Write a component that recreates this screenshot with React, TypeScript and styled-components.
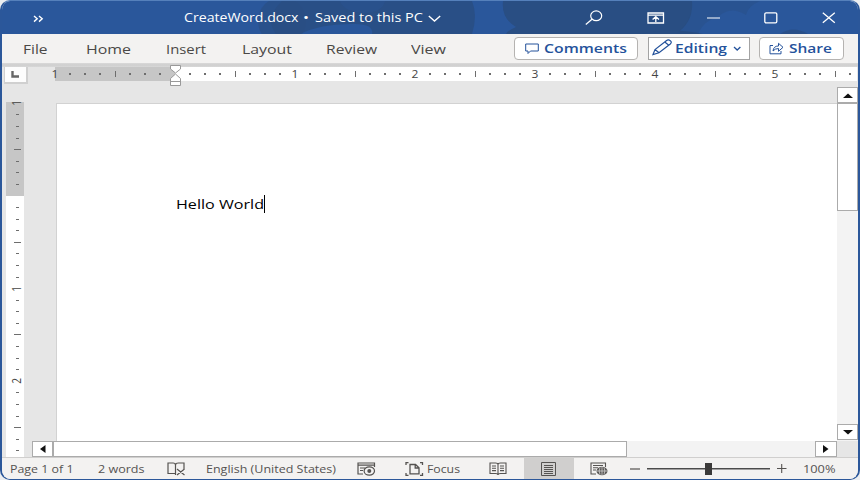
import React, { useLayoutEffect, useRef, useState } from "react";
import styled, { createGlobalStyle } from "styled-components";

const GlobalStyle = createGlobalStyle`
  * { box-sizing: border-box; }
  body { margin: 0; background: #eceef0; font-family: "Open Sans", "Noto Sans", sans-serif; overflow: hidden; }
  svg { display: block; flex: none; }
`;

const Window = styled.div`
  position: relative;
  width: 860px;
  height: 480px;
  display: flex;
  flex-direction: column;
  overflow: hidden;
  border: 2px solid #2b579a;
  border-top-width: 1px;
  border-top-color: #5580bb;
  border-bottom-width: 1px;
  border-radius: 10px;
  background: #e6e6e6;
`;

const TitleBar = styled.header`
  position: relative;
  flex: none;
  height: 33px;
  display: flex;
  align-items: center;
  background: #2a579b;
  color: #fff;
`;

const TitlePattern = styled.svg`
  position: absolute;
  inset: 0;
`;

const Item = styled.div<{ $before?: number; $shift?: number }>`
  position: relative;
  flex: none;
  margin-left: ${(p) => p.$before ?? 0}px;
  top: ${(p) => p.$shift ?? 0}px;
`;

const Ribbon = styled.nav`
  flex: none;
  height: 29px;
  display: flex;
  align-items: center;
  background: #f3f2f1;
  color: #4a4846;
`;

const RibbonEdge = styled.div`
  flex: none;
  height: 4px;
  background: linear-gradient(#dad9d9, #cfcfcf 50%, #d8d8d8);
`;

const RibbonButton = styled.button<{ $width: number; $before: number; $square?: boolean }>`
  flex: none;
  display: flex;
  align-items: center;
  width: ${(p) => p.$width}px;
  height: 23px;
  margin: 0 0 0 ${(p) => p.$before}px;
  padding: 0;
  border: 1px solid ${(p) => (p.$square ? "#a3a3a3" : "#b5b3b1")};
  border-radius: ${(p) => (p.$square ? 0 : 4)}px;
  background: #fff;
  color: #24529b;
  font-family: inherit;
  text-align: left;
`;

const FitBox = styled.span<{ $width: number; $size: number; $weight: number }>`
  display: block;
  flex: none;
  width: ${(p) => p.$width}px;
  font-size: ${(p) => p.$size}px;
  font-weight: ${(p) => p.$weight};
  line-height: 18px;
  height: 18px;
`;

const FitInner = styled.span`
  display: inline-block;
  white-space: nowrap;
  transform-origin: 0 50%;
`;

function Wide({ text, width, size, weight = 400 }: { text: string; width: number; size: number; weight?: number }) {
  const ref = useRef<HTMLSpanElement>(null);
  const [scale, setScale] = useState(1);
  useLayoutEffect(() => {
    const natural = parseFloat(getComputedStyle(ref.current!).width);
    if (natural) setScale(width / natural);
  }, [text, width, size, weight]);
  return (
    <FitBox $width={width} $size={size} $weight={weight}>
      <FitInner ref={ref} style={{ transform: `scaleX(${scale})` }}>{text}</FitInner>
    </FitBox>
  );
}

const RulerRow = styled.div`
  flex: none;
  height: 20px;
  display: flex;
  align-items: flex-start;
`;

const TabSelector = styled.div`
  flex: none;
  width: 24px;
  height: 17px;
  margin-left: 2px;
  border: 1px solid #d0d0d0;
  border-width: 0 2px 2px 1px;
  background: #fdfdfd;
  display: flex;
  align-items: center;
  justify-content: center;
`;

const HRuler = styled.div`
  position: relative;
  flex: none;
  width: 802px;
  height: 14px;
  margin-left: 27px;
  display: flex;
  background: linear-gradient(to right, #c6c6c6 120px, #fff 120px);
`;

const HTicks = styled.div`
  display: flex;
  width: 802px;
  margin-left: -7.5px;
`;

const HCell = styled.div`
  flex: none;
  width: 15px;
  height: 14px;
  display: flex;
  align-items: center;
  justify-content: center;
  font-size: 10px;
  line-height: 14px;
  color: #444;
`;

const Mark = styled.i<{ $w: number; $h: number }>`
  display: block;
  width: ${(p) => p.$w}px;
  height: ${(p) => p.$h}px;
  background: #6d6d6d;
`;

const Digit = styled.span<{ $vertical?: boolean }>`
  display: block;
  transform: ${(p) => (p.$vertical ? "translateX(-1px) rotate(-90deg) scaleY(1.2)" : "scaleX(1.2)")};
`;

const IndentMarker = styled.svg`
  position: absolute;
  left: 114px;
  top: -3px;
  overflow: visible;
`;

const Workspace = styled.main`
  flex: 1;
  min-height: 0;
  display: flex;
`;

const VRulerColumn = styled.div`
  flex: none;
  width: 30px;
  padding: 15px 0 0 4px;
`;

const VRuler = styled.div`
  width: 18px;
  height: 355px;
  display: flex;
  align-items: flex-start;
  background: linear-gradient(#c6c6c6 94px, #fff 94px);
`;

const VTicks = styled.div`
  margin-top: -4.4px;
`;

const VCell = styled.div`
  height: 11.58px;
  padding-left: 4px;
  width: 18px;
  display: flex;
  align-items: center;
  justify-content: center;
  font-size: 10px;
  line-height: 12px;
  color: #444;
`;

const Pane = styled.div`
  flex: none;
  width: 826px;
  display: flex;
  flex-direction: column;
`;

const Upper = styled.div`
  flex: none;
  height: 354px;
  display: flex;
`;

const Canvas = styled.div`
  flex: none;
  width: 805px;
  padding: 16px 0 0 24px;
`;

const Page = styled.article`
  height: 338px;
  padding: 91px 0 0 119px;
  border: 1px solid #d2d2d2;
  border-width: 1px 0 0 1px;
  background: #fff;
  color: #000;
  display: flex;
  align-items: flex-start;
`;

const Caret = styled.i`
  width: 1px;
  height: 18px;
  background: #000;
`;

const VScroll = styled.div`
  flex: none;
  width: 21px;
  padding-bottom: 1px;
  display: flex;
  flex-direction: column;
  background: #f3f3f3;
`;

const HScroll = styled.div`
  flex: none;
  width: 805px;
  height: 16px;
  display: flex;
  background: #f3f3f3;
`;

const ScrollPart = styled.div<{ $w: number; $h: number }>`
  flex: none;
  width: ${(p) => p.$w}px;
  height: ${(p) => p.$h}px;
  border: 1px solid #ababab;
  background: #fff;
  display: flex;
  align-items: center;
  justify-content: center;
`;

const Filler = styled.div`
  flex: 1;
`;

const StatusBar = styled.footer`
  flex: none;
  height: 22px;
  display: flex;
  align-items: center;
  background: #f3f2f1;
  border-top: 1px solid #d0cfce;
  color: #555351;
`;

const ActiveView = styled.div`
  flex: none;
  width: 50px;
  height: 21px;
  margin-left: 17px;
  padding-right: 2px;
  background: #d0cfce;
  display: flex;
  align-items: center;
  justify-content: center;
`;

const Slider = styled.div`
  flex: none;
  width: 123px;
  height: 12px;
  margin-left: 7px;
  display: flex;
  align-items: center;
  justify-content: center;
  background: linear-gradient(#4b4b4b, #4b4b4b) center / 100% 1.5px no-repeat;
`;

const Thumb = styled.i`
  width: 7px;
  height: 12px;
  background: #3b3a39;
`;

const hLabels: Record<number, string> = { 0: "1", 16: "1", 24: "2", 32: "3", 40: "4", 48: "5" };
const vLabels: Record<number, string> = { 0: "1", 16: "1", 24: "2" };

function HTick({ index }: { index: number }) {
  if (hLabels[index]) return <HCell><Digit>{hLabels[index]}</Digit></HCell>;
  if (index === 8) return <HCell />;
  return <HCell><Mark $w={index % 4 === 0 ? 1 : 2} $h={index % 4 === 0 ? 6 : 2} /></HCell>;
}

function VTick({ index }: { index: number }) {
  if (vLabels[index]) return <VCell><Digit $vertical>{vLabels[index]}</Digit></VCell>;
  if (index === 8) return <VCell />;
  return <VCell><Mark $w={index % 4 === 0 ? 7 : 3} $h={1} /></VCell>;
}

const tabs = [
  { name: "File", before: 21, width: 24.5 },
  { name: "Home", before: 38.5, width: 45 },
  { name: "Insert", before: 35, width: 40 },
  { name: "Layout", before: 35.5, width: 50 },
  { name: "Review", before: 34, width: 51 },
  { name: "View", before: 34, width: 35 },
];

const line = { fill: "none", stroke: "currentColor" } as const;

export default function App() {
  return (
    <>
      <GlobalStyle />
      <Window>
        <TitleBar>
          <TitlePattern width="856" height="33" viewBox="2 1 856 33">
            <g fill="#294e83">
              <circle cx="282" cy="21" r="24" opacity=".65" />
              <path d="M282 1H472Q478 15 472 34H372Q374 24 355 24Q322 23 300 34H276Q264 18 282 1Z" opacity=".85" />
              <path d="M503 1H692Q694 22 676 34H506Q507 31 516 27Q501 18 503 1Z" />
              <path d="M640 34Q674 27 703 34Z" />
              <path d="M690 1H760Q748 6 746 15Q730 5 718 17Q704 20 698 34H676Q694 20 690 1Z" opacity=".4" />
              <path d="M780 34Q793 25 808 34Z" opacity=".8" />
            </g>
            <path d="M340 1H385Q382 13 363 13Q344 12 340 1Z" fill="#2a579b" opacity=".3" />
          </TitlePattern>
          <Item $before={31} $shift={1}>
            <svg width="11" height="8" viewBox="0 0 11 8"><path d="M1 1l3.2 2.8L1 6.6M6 1l3.2 2.8L6 6.6" {...line} strokeWidth="1.4" /></svg>
          </Item>
          <Item $before={139.5} $shift={0.5}><Wide text="CreateWord.docx" width={114.5} size={12} /></Item>
          <Item $before={4.5} $shift={0.5}><Wide text="•" width={6} size={12} /></Item>
          <Item $before={6} $shift={0.5}><Wide text="Saved to this PC" width={108} size={12} /></Item>
          <Item $before={5} $shift={1}>
            <svg width="13" height="8" viewBox="0 0 13 8"><path d="M.8 1l5.7 5 5.7-5" {...line} strokeWidth="1.4" /></svg>
          </Item>
          <Item $before={144}>
            <svg width="18" height="16" viewBox="0 0 18 16"><ellipse cx="11.2" cy="5.8" rx="5.5" ry="4.9" {...line} strokeWidth="1.2" /><path d="M7 9.3L.8 14.6" {...line} strokeWidth="1.3" /></svg>
          </Item>
          <Item $before={44.5}>
            <svg width="18" height="12" viewBox="0 0 18 12"><path d="M1 1h15.5v10H1zM1 3.2h15.5M8.8 10V5M5.6 7.4l3.2-2.7L12 7.4" {...line} strokeWidth="1.3" /></svg>
          </Item>
          <Item $before={42}><svg width="14" height="2"><path d="M0 1h13" {...line} strokeWidth="1.2" /></svg></Item>
          <Item $before={43}>
            <svg width="14" height="12"><rect x=".8" y=".8" width="12" height="10" rx="1.3" {...line} strokeWidth="1.3" /></svg>
          </Item>
          <Item $before={43.5}>
            <svg width="14" height="12"><path d="M.8.8l12 10M12.8.8l-12 10" {...line} strokeWidth="1.3" /></svg>
          </Item>
        </TitleBar>

        <Ribbon>
          {tabs.map((t) => (
            <Item key={t.name} $before={t.before}><Wide text={t.name} width={t.width} size={12.8} /></Item>
          ))}
          <RibbonButton $width={124} $before={68.5}>
            <Item $before={10}>
              <svg width="14" height="12" viewBox="0 0 14 12"><path d="M.7 1h12.6v7H5.5L3 10.5V8H.7z" {...line} strokeWidth="1" /></svg>
            </Item>
            <Item $before={5} $shift={0.5}><Wide text="Comments" width={83} size={12.3} weight={600} /></Item>
          </RibbonButton>
          <RibbonButton $width={102} $before={9.5} $square>
            <Item $before={3} $shift={-1}>
              <svg width="21" height="17" viewBox="0 0 21 17"><path d="M1 15.5l2-5L14.3 1.7q2-1.5 4 0t0 3.3L7 13.8zM3 10.5l4 3.3M12.8 3l4 3.2" {...line} strokeWidth="1.2" /></svg>
            </Item>
            <Item $before={2} $shift={0.5}><Wide text="Editing" width={52} size={12.3} weight={600} /></Item>
            <Item $before={6}>
              <svg width="9" height="6"><path d="M1 1l3.2 3L7.4 1" {...line} strokeWidth="1.3" /></svg>
            </Item>
          </RibbonButton>
          <RibbonButton $width={85} $before={9.5}>
            <Item $before={9}>
              <svg width="15" height="13" viewBox="0 0 15 13"><path d="M4 3.5H1v8.3h11V9M4 9q.5-5 5.5-5V1.3l4.5 4-4.5 4V6.5Q6 6.5 4 9z" {...line} strokeWidth="1" /></svg>
            </Item>
            <Item $before={5} $shift={0.5}><Wide text="Share" width={43} size={12.3} weight={600} /></Item>
          </RibbonButton>
        </Ribbon>
        <RibbonEdge />

        <RulerRow>
          <TabSelector>
            <svg width="9" height="7"><path d="M1.5 0v5.5H8" {...line} stroke="#666" strokeWidth="2.4" /></svg>
          </TabSelector>
          <HRuler>
            <HTicks>{Array.from({ length: 54 }, (_, i) => <HTick key={i} index={i} />)}</HTicks>
            <IndentMarker width="13" height="22">
              <g fill="#fff" stroke="#999" strokeWidth="1">
                <path d="M1.5 1.5h10v3.5l-5 4-5-4z" />
                <path d="M1.5 21.5v-7l5-4.5 5 4.5v7zM1.5 17.5h10" />
              </g>
            </IndentMarker>
          </HRuler>
        </RulerRow>

        <Workspace>
          <VRulerColumn>
            <VRuler>
              <VTicks>{Array.from({ length: 31 }, (_, i) => <VTick key={i} index={i} />)}</VTicks>
            </VRuler>
          </VRulerColumn>
          <Pane>
            <Upper>
              <Canvas>
                <Page>
                  <Wide text="Hello World" width={88} size={12.8} />
                  <Caret />
                </Page>
              </Canvas>
              <VScroll>
                <ScrollPart $w={21} $h={16}><svg width="10" height="5"><path d="M0 5l5-4.5L10 5z" fill="#111" /></svg></ScrollPart>
                <ScrollPart $w={21} $h={108} />
                <Filler />
                <ScrollPart $w={21} $h={16}><svg width="10" height="5"><path d="M0 0l5 4.5L10 0z" fill="#111" /></svg></ScrollPart>
              </VScroll>
            </Upper>
            <HScroll>
              <ScrollPart $w={21} $h={16}><svg width="6" height="8"><path d="M5.5 0L0 4l5.5 4z" fill="#111" /></svg></ScrollPart>
              <ScrollPart $w={574} $h={16} />
              <Filler />
              <ScrollPart $w={22} $h={16}><svg width="6" height="8"><path d="M0 0l5.5 4L0 8z" fill="#111" /></svg></ScrollPart>
            </HScroll>
          </Pane>
        </Workspace>

        <StatusBar>
          <Item $before={8}><Wide text="Page 1 of 1" width={63.5} size={10.5} /></Item>
          <Item $before={24}><Wide text="2 words" width={46.5} size={10.5} /></Item>
          <Item $before={22.5}>
            <svg width="19" height="14" viewBox="0 0 19 14"><path d="M8.5 11.5H1V1h5q2.5 0 2.5 2v10M8.5 3q0-2 3-2H17v6M10 7l7.5 6M17.5 7L10 13" {...line} strokeWidth="1.2" /></svg>
          </Item>
          <Item $before={20}><Wide text="English (United States)" width={130} size={10.5} /></Item>
          <Item $before={21.5}>
            <svg width="19" height="14" viewBox="0 0 19 14"><path d="M6 12H1V1h16.5v4M1 3.2h16.5M3 6h5M3 8.5h3" {...line} strokeWidth="1.2" /><ellipse cx="12.3" cy="9" rx="5.2" ry="4.2" {...line} strokeWidth="1.2" /><circle cx="12.3" cy="9" r="2" fill="currentColor" /></svg>
          </Item>
          <Item $before={29}>
            <svg width="19" height="14" viewBox="0 0 19 14"><path d="M3.5.7H1V3M15 .7h2.5V3M3.5 13.3H1V11M15 13.3h2.5V11M5 2.5h5.5L14 5.8v6H5zM10.2 2.5V6H14" {...line} strokeWidth="1.3" /></svg>
          </Item>
          <Item $before={3}><Wide text="Focus" width={33} size={10.5} /></Item>
          <Item $before={29}>
            <svg width="18" height="14" viewBox="0 0 18 14"><path d="M9 2.5v10.5M1 1h5.5Q9 1 9 2.5 9 1 11.5 1H17v10.5h-5.5Q9 11.5 9 13q0-1.5-2.5-1.5H1zM3 4h4M3 6.3h4M3 8.6h4M11 4h4M11 6.3h4M11 8.6h4" {...line} strokeWidth="1.1" /></svg>
          </Item>
          <ActiveView>
            <svg width="15" height="14" viewBox="0 0 15 14"><path d="M.5.5h14v13H.5zM3 3.5h9M3 5.5h9M3 7.5h9M3 9.5h9M3 11.5h9" {...line} strokeWidth="1" /></svg>
          </ActiveView>
          <Item $before={16}>
            <svg width="19" height="14" viewBox="0 0 19 14"><path d="M6 12H1V1h14.5v4M3 3.5h10M3 5.8h5M3 8h3" {...line} strokeWidth="1.1" /><ellipse cx="12" cy="9" rx="5.5" ry="4.3" fill="#5c5a58" /><path d="M7 9h10M12 5v8M10 5.5q-1.7 3.5 0 7M14 5.5q1.7 3.5 0 7" fill="none" stroke="#ddd" strokeWidth=".7" /></svg>
          </Item>
          <Item $before={21}><svg width="10" height="2"><path d="M0 1h10" {...line} strokeWidth="1.2" /></svg></Item>
          <Slider><Thumb /></Slider>
          <Item $before={7}><svg width="10" height="9"><path d="M0 4.5h9.5M4.7 0v9" {...line} strokeWidth="1.1" /></svg></Item>
          <Item $before={15.5}><Wide text="100%" width={32.5} size={10.5} /></Item>
        </StatusBar>
      </Window>
    </>
  );
}
